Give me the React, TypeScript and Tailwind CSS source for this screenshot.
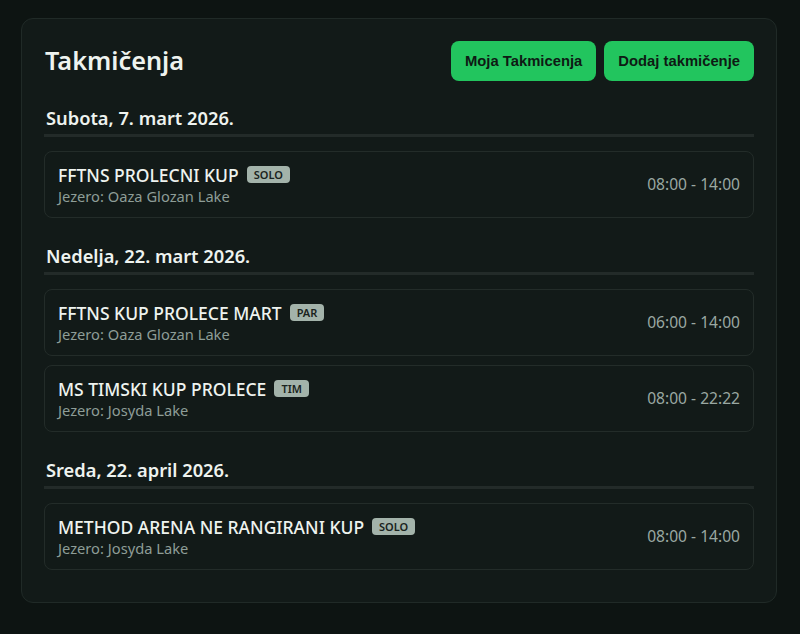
import React from 'react';

type Event = { name: string; type: string; lake: string; time: string };
type Day = { label: string; events: Event[] };

const days: Day[] = [
  {
    label: 'Subota, 7. mart 2026.',
    events: [{ name: 'FFTNS PROLECNI KUP', type: 'SOLO', lake: 'Oaza Glozan Lake', time: '08:00 - 14:00' }],
  },
  {
    label: 'Nedelja, 22. mart 2026.',
    events: [
      { name: 'FFTNS KUP PROLECE MART', type: 'PAR', lake: 'Oaza Glozan Lake', time: '06:00 - 14:00' },
      { name: 'MS TIMSKI KUP PROLECE', type: 'TIM', lake: 'Josyda Lake', time: '08:00 - 22:22' },
    ],
  },
  {
    label: 'Sreda, 22. april 2026.',
    events: [{ name: 'METHOD ARENA NE RANGIRANI KUP', type: 'SOLO', lake: 'Josyda Lake', time: '08:00 - 14:00' }],
  },
];

const EventRow = ({ event }: { event: Event }) => (
  <div className="flex h-[67px] items-center justify-between rounded-lg border border-[#232c29] px-[13px]">
    <div className="flex flex-col">
      <div className="flex items-center gap-2">
        <span className="text-[17.5px] font-medium leading-[22px] text-[#eef3ef]">{event.name}</span>
        <span className="rounded bg-[#a3b3aa] px-[7px] text-[11px] font-semibold leading-[17px] text-[#1a2320]">
          {event.type}
        </span>
      </div>
      <span className="text-[14.7px] leading-5 text-[#8e9d97]">Jezero: {event.lake}</span>
    </div>
    <span className="text-[15.6px] text-[#9aa8a2]">{event.time}</span>
  </div>
);

export default function App() {
  return (
    <div
      className="min-h-[634px] bg-[#0d1412] pl-[21px] pr-[23px] pt-[18px]"
      style={{ fontFamily: '"Noto Sans", sans-serif' }}
    >
      <div className="rounded-xl border border-[#202a27] bg-[#121a18] px-[22px] pb-[32px] pt-[22px]">
        <div className="flex items-center justify-between">
          <h1 className="pl-[1px] text-[25.3px] font-semibold text-[#eef3ef]">Takmičenja</h1>
          <div className="flex gap-2" style={{ fontFamily: '"Liberation Sans", Arial, sans-serif' }}>
            <button className="h-10 rounded-lg bg-[#22c55e] px-[14px] text-[14.8px] font-bold text-[#0e1a14]">
              Moja Takmicenja
            </button>
            <button className="h-10 rounded-lg bg-[#22c55e] px-[14px] text-[14.8px] font-bold text-[#0e1a14]">
              Dodaj takmičenje
            </button>
          </div>
        </div>
        <div className="mt-[23px] flex flex-col gap-[24px]">
          {days.map((day) => (
            <div key={day.label}>
              <h2 className="border-b-[3px] border-[#232b29] px-[2px] pb-[2px] text-[18.3px] font-semibold leading-7 text-[#eef3ef]">
                {day.label}
              </h2>
              <div className="mt-[14px] flex flex-col gap-[9px]">
                {day.events.map((e) => (
                  <EventRow key={e.name} event={e} />
                ))}
              </div>
            </div>
          ))}
        </div>
      </div>
    </div>
  );
}
